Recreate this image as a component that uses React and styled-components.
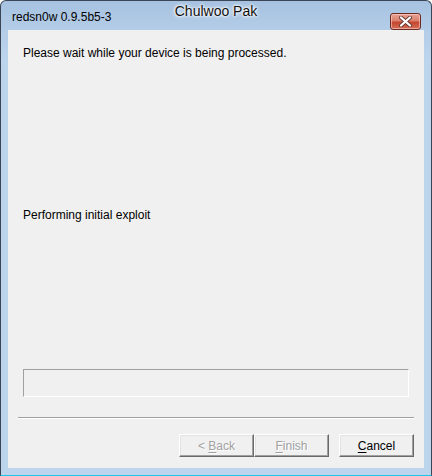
import React from "react";
import styled, { createGlobalStyle } from "styled-components";

const GlobalStyle = createGlobalStyle`
  html, body {
    margin: 0;
    padding: 0;
    background: #ffffff;
  }
  * {
    box-sizing: border-box;
  }
`;

const Window = styled.div`
  position: relative;
  width: 432px;
  height: 476px;
  display: flex;
  flex-direction: column;
  border: 1px solid #3a4656;
  border-bottom: 1px solid #1fc3e6;
  border-radius: 6px 6px 0 0;
  background: linear-gradient(to bottom, #a6c2e0 0px, #b4cde8 30px, #bcd4ec 60px, #bcd4ec 100%);
  padding: 0 7px 7px 7px;
  font-family: "Liberation Sans", Arial, sans-serif;
  overflow: hidden;
`;

const TitleBar = styled.div`
  height: 29px;
  display: flex;
  align-items: center;
  justify-content: space-between;
  padding: 3px 3px 0 4px;
`;

const TitleText = styled.span`
  font-size: 12px;
  color: #000000;
`;

// watermark name drawn over the caption
const Owner = styled.span`
  position: absolute;
  top: 2px;
  left: 0;
  right: 0;
  text-align: center;
  font-size: 14px;
  color: #101010;
  text-shadow: 0 0 4px #ffffff, 0 0 3px #ffffff, 0 0 2px #ffffff;
`;

const CloseButton = styled.button`
  width: 31px;
  height: 17px;
  margin-top: 8px;
  padding: 0;
  border: 1px solid #6b2a22;
  border-radius: 3px;
  background: linear-gradient(to bottom, #e8a293 0%, #d9806d 45%, #c6452e 55%, #d4705a 100%);
  box-shadow: inset 0 0 0 1px rgba(255, 210, 200, 0.6);
  display: flex;
  align-items: center;
  justify-content: center;
`;

const Client = styled.div`
  flex: 1;
  display: flex;
  flex-direction: column;
  background: #f0f0f0;
  padding: 0 0 11px 0;
`;

const Message = styled.p`
  margin: 16px 0 0 15px;
  font-size: 12px;
  line-height: 14px;
  color: #000000;
`;

const Status = styled(Message)`
  margin-top: 148px;
`;

const Spacer = styled.div`
  flex: 1;
`;

const Progress = styled.div`
  height: 28px;
  margin: 0 15px;
  border: 1px solid #a0a0a0;
  border-right-color: #ffffff;
  border-bottom-color: #ffffff;
`;

const Separator = styled.div`
  height: 2px;
  margin: 20px 10px 0 10px;
  border-top: 1px solid #a0a0a0;
  border-bottom: 1px solid #ffffff;
`;

const ButtonRow = styled.div`
  display: flex;
  justify-content: flex-end;
  margin: 15px 10px 0 0;
`;

const Group = styled.div`
  display: flex;
  margin-right: 10px;
`;

const WizardButton = styled.button`
  width: 75px;
  height: 23px;
  padding: 0;
  background: #f0f0f0;
  border: 1px solid;
  border-color: #ffffff #696969 #696969 #ffffff;
  box-shadow: inset -1px -1px 0 #a0a0a0, inset 1px 1px 0 #e3e3e3;
  font-family: "Liberation Sans", Arial, sans-serif;
  font-size: 12px;
  color: ${(p) => (p.disabled ? "#a0a0a0" : "#000000")};
  text-shadow: ${(p) => (p.disabled ? "1px 1px 0 #ffffff" : "none")};

  u {
    text-decoration: underline;
    text-underline-offset: 2px;
  }
`;

const CloseGlyph = () => (
  <svg width="13" height="11" viewBox="0 0 13 11">
    <path d="M2 1.5 L11 9.5 M11 1.5 L2 9.5" stroke="#6a3a34" strokeWidth="4" strokeLinecap="round" />
    <path d="M2 1.5 L11 9.5 M11 1.5 L2 9.5" stroke="#ffffff" strokeWidth="2.2" strokeLinecap="round" />
  </svg>
);

export default function App() {
  return (
    <>
      <GlobalStyle />
      <Window>
        <TitleBar>
          <TitleText>redsn0w 0.9.5b5-3</TitleText>
          <CloseButton>
            <CloseGlyph />
          </CloseButton>
        </TitleBar>
        <Owner>Chulwoo Pak</Owner>
        <Client>
          <Message>Please wait while your device is being processed.</Message>
          <Status>Performing initial exploit</Status>
          <Spacer />
          <Progress />
          <Separator />
          <ButtonRow>
            <Group>
              <WizardButton disabled>
                &lt; <u>B</u>ack
              </WizardButton>
              <WizardButton disabled>
                <u>F</u>inish
              </WizardButton>
            </Group>
            <WizardButton>
              <u>C</u>ancel
            </WizardButton>
          </ButtonRow>
        </Client>
      </Window>
    </>
  );
}
